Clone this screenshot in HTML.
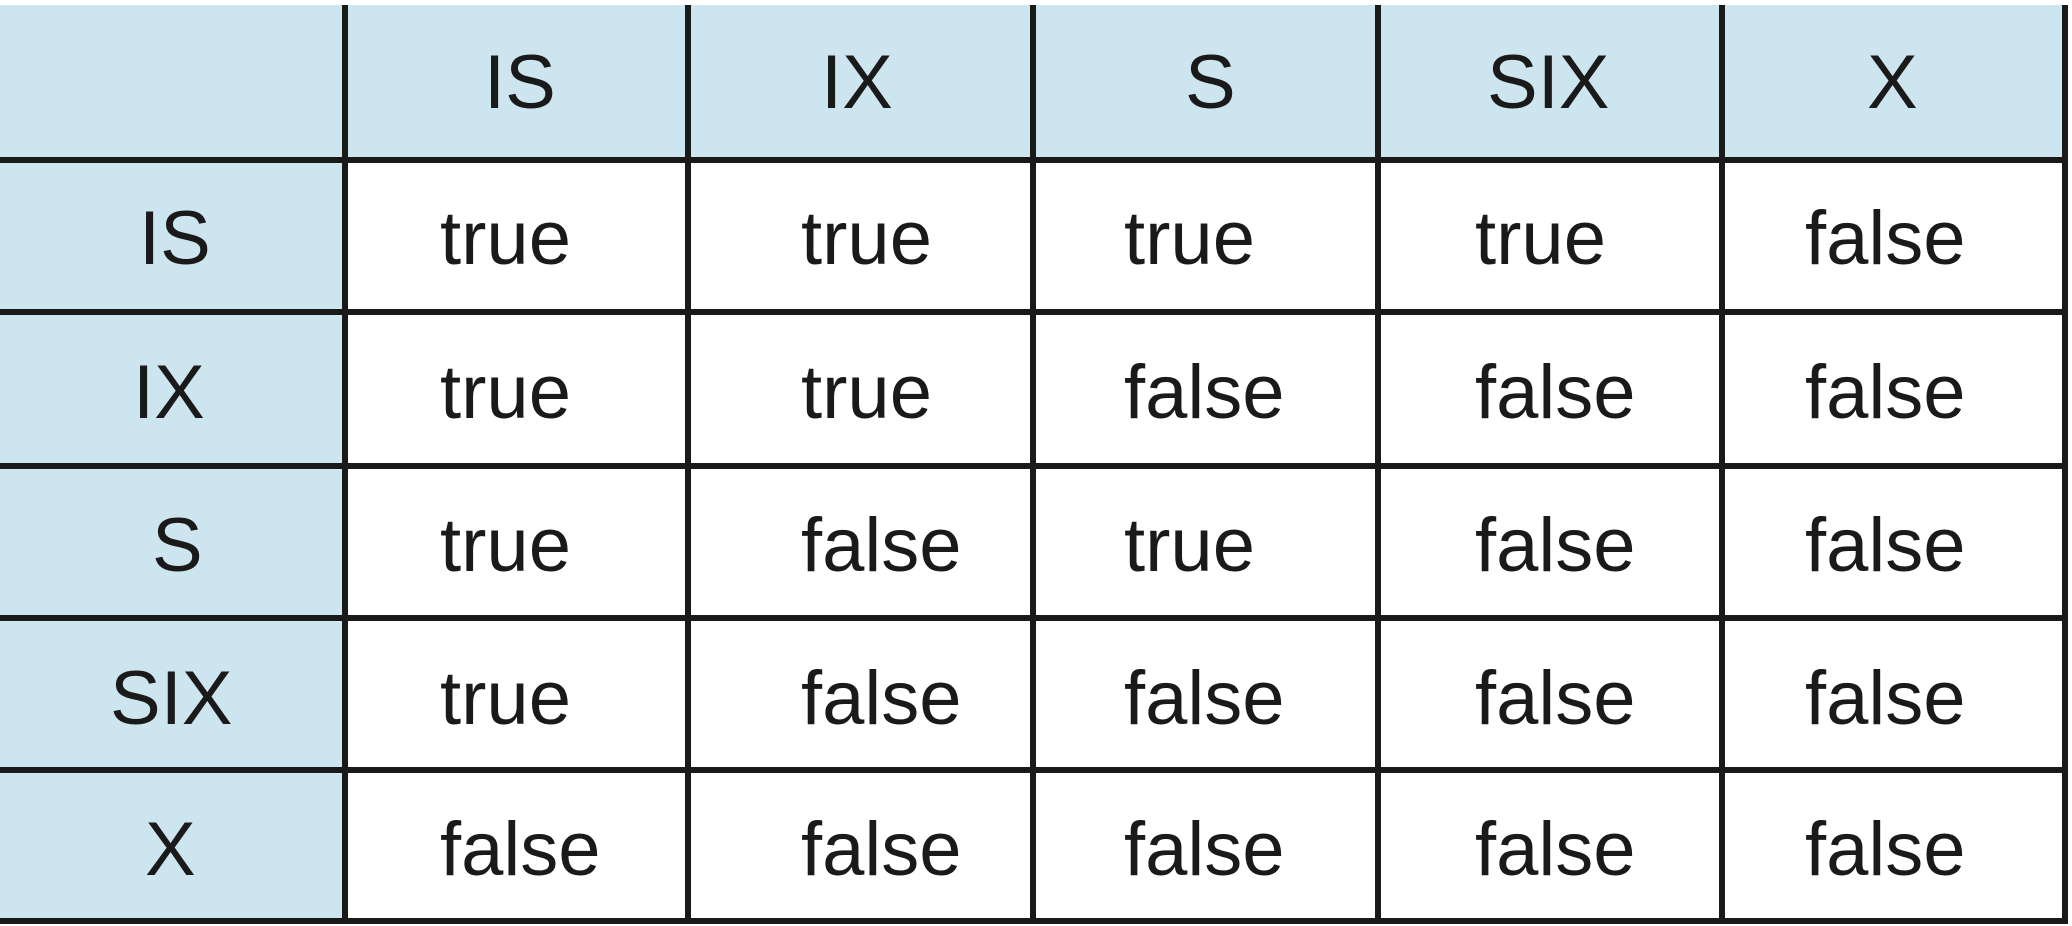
<!DOCTYPE html>
<html><head><style>html,body{margin:0;padding:0;background:#fff;width:2072px;height:926px;overflow:hidden}</style></head>
<body>
<svg width="2072" height="926" xmlns="http://www.w3.org/2000/svg" font-family="Liberation Sans, sans-serif" font-size="76" fill="#1a1a1a">
<rect x="0" y="5" width="2066" height="156" fill="#cde5ee"/>
<rect x="0" y="160" width="345" height="762" fill="#cde5ee"/>
<g stroke="#1a1a1a" stroke-width="6">
<line x1="345" y1="5" x2="345" y2="924"/>
<line x1="688" y1="5" x2="688" y2="924"/>
<line x1="1033" y1="5" x2="1033" y2="924"/>
<line x1="1378" y1="5" x2="1378" y2="924"/>
<line x1="1722" y1="5" x2="1722" y2="924"/>
<line x1="2065" y1="5" x2="2065" y2="924"/>
<line x1="0" y1="160" x2="2068" y2="160"/>
<line x1="0" y1="312" x2="2068" y2="312"/>
<line x1="0" y1="466" x2="2068" y2="466"/>
<line x1="0" y1="618" x2="2068" y2="618"/>
<line x1="0" y1="770" x2="2068" y2="770"/>
<line x1="0" y1="921" x2="2068" y2="921"/>
</g>
<g>
<text x="484" y="108">IS</text><text x="821" y="108">IX</text><text x="1185" y="108">S</text><text x="1487" y="108">SIX</text><text x="1867" y="108">X</text>
<text x="139" y="264">IS</text><text x="133" y="418">IX</text><text x="152" y="571">S</text><text x="110" y="724">SIX</text><text x="145" y="875">X</text>
</g>
<g>
<text x="440" y="264">true</text><text x="801" y="264">true</text><text x="1124" y="264">true</text><text x="1475" y="264">true</text><text x="1805" y="264">false</text>
<text x="440" y="418">true</text><text x="801" y="418">true</text><text x="1124" y="418">false</text><text x="1475" y="418">false</text><text x="1805" y="418">false</text>
<text x="440" y="571">true</text><text x="801" y="571">false</text><text x="1124" y="571">true</text><text x="1475" y="571">false</text><text x="1805" y="571">false</text>
<text x="440" y="724">true</text><text x="801" y="724">false</text><text x="1124" y="724">false</text><text x="1475" y="724">false</text><text x="1805" y="724">false</text>
<text x="440" y="875">false</text><text x="801" y="875">false</text><text x="1124" y="875">false</text><text x="1475" y="875">false</text><text x="1805" y="875">false</text>
</g>
</svg>
</body></html>
